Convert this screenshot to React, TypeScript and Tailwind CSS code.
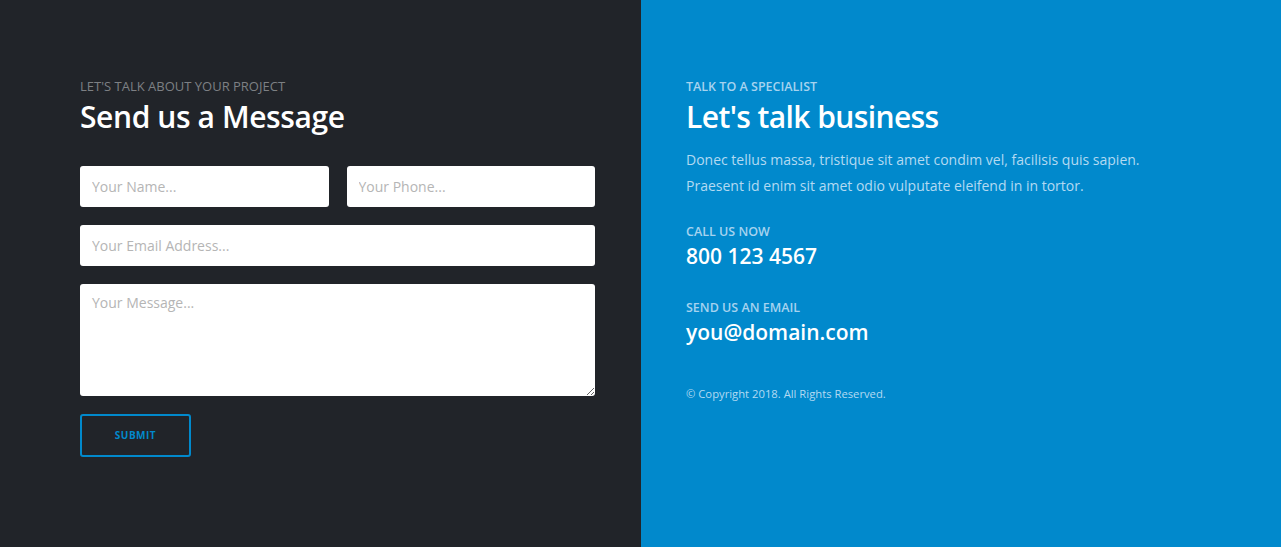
import React from "react"

const inputCls =
  "h-[41px] w-full rounded-[3px] bg-white px-3 text-[14px] text-gray-700 outline-none placeholder:text-[#b5b5b5]"

export default function App() {
  return (
    <div
      className="flex h-[547px] w-full"
      style={{ fontFamily: '"Open Sans", "Noto Sans", sans-serif' }}
    >
      {/* left: form */}
      <div className="w-[641px] shrink-0 bg-[#212429] pl-[80px] pr-[46px] pt-[77px]">
        <p className="text-[13px] leading-[19px] uppercase text-[#7d8084]">Let's talk about your project</p>
        <h2 className="mt-[2px] text-[30px] leading-[38px] font-semibold tracking-[-0.4px] text-white">
          Send us a Message
        </h2>

        <form className="mt-[30px] flex flex-col gap-[18px]" onSubmit={(e) => e.preventDefault()}>
          <div className="grid grid-cols-2 gap-[18px]">
            <input className={inputCls} placeholder="Your Name..." />
            <input className={inputCls} placeholder="Your Phone..." />
          </div>
          <input className={inputCls} placeholder="Your Email Address..." />
          <textarea
            className="h-[112px] w-full rounded-[3px] bg-white px-3 py-[8px] text-[14px] text-gray-700 outline-none placeholder:text-[#b5b5b5]"
            placeholder="Your Message..."
          />
          <div>
            <button
              type="submit"
              className="h-[43px] w-[111px] rounded-[3px] border-2 border-[#0189cc] text-[10px] font-bold tracking-[0.5px] uppercase text-[#0189cc]"
            >
              Submit
            </button>
          </div>
        </form>
      </div>

      {/* right: contact info */}
      <div className="flex-1 bg-[#0189cc] pl-[45px] pt-[77px] text-white">
        <p className="text-[12.5px] leading-[19px] font-semibold uppercase text-[#a6d3ef]">Talk to a specialist</p>
        <h2 className="mt-[2px] text-[30px] leading-[38px] font-semibold tracking-[-0.6px]">Let's talk business</h2>
        <p className="mt-[11px] text-[14px] leading-[26px] text-[#b3daf2]">
          Donec tellus massa, tristique sit amet condim vel, facilisis quis sapien.
          <br />
          Praesent id enim sit amet odio vulputate eleifend in in tortor.
        </p>

        <p className="mt-[24px] text-[12.5px] leading-[18px] font-semibold uppercase text-[#a6d3ef]">Call us now</p>
        <p className="text-[21px] leading-[30px] font-semibold">800 123 4567</p>

        <p className="mt-[28px] text-[12.5px] leading-[18px] font-semibold uppercase text-[#a6d3ef]">Send us an email</p>
        <p className="text-[21px] leading-[30px] font-semibold">you@domain.com</p>

        <p className="mt-[39px] text-[11.25px] leading-[16px] text-[#b3daf2]">© Copyright 2018. All Rights Reserved.</p>
      </div>
    </div>
  )
}
